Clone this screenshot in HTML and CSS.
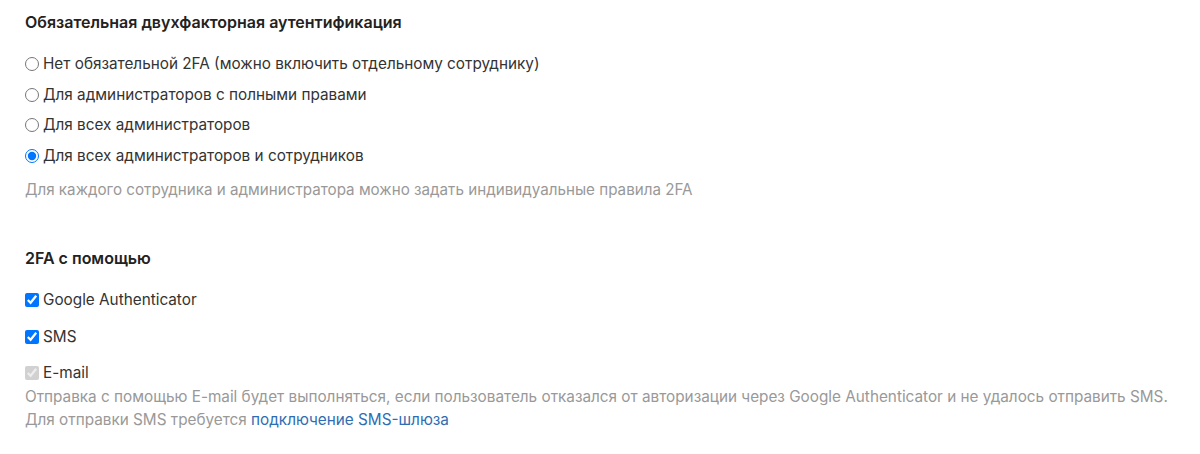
FILE: index.html
```html
<!DOCTYPE html>
<html lang="ru">
<head>
    <meta charset="UTF-8">
    <title>Двухфакторная аутентификация</title>
    <link rel="stylesheet" href="styles.css">
</head>
<body>
    <section class="block">
        <h3>Обязательная двухфакторная аутентификация</h3>
        <div class="options">
            <label class="option"><input type="radio" name="force2fa" value="none">Нет обязательной 2FA (можно включить отдельному сотруднику)</label>
            <label class="option"><input type="radio" name="force2fa" value="full">Для администраторов с полными правами</label>
            <label class="option"><input type="radio" name="force2fa" value="admins">Для всех администраторов</label>
            <label class="option"><input type="radio" name="force2fa" value="all" checked>Для всех администраторов и сотрудников</label>
        </div>
        <p class="hint">Для каждого сотрудника и администратора можно задать индивидуальные правила 2FA</p>
    </section>

    <section class="block methods">
        <h3>2FA с помощью</h3>
        <div class="checks">
            <label class="option"><input type="checkbox" checked>Google Authenticator</label>
            <label class="option"><input type="checkbox" checked>SMS</label>
            <label class="option"><input type="checkbox" checked disabled>E-mail</label>
        </div>
        <p class="hint tight">Отправка с помощью E-mail будет выполняться, если пользователь отказался от авторизации через Google Authenticator и не удалось отправить SMS.<br>
        Для отправки SMS требуется <a href="#">подключение SMS-шлюза</a></p>
    </section>
</body>
</html>
```

FILE: styles.css
```css
body {
    margin: 0;
    padding: 12px 25px 0;
    font-family: Inter, "Noto Sans", sans-serif;
    font-size: 15.3px;
    color: #333;
    background: #fff;
}
h3 {
    margin: 0;
    font-size: 16px;
    font-weight: 600;
    line-height: 20px;
    color: #222;
}
.options {
    display: flex;
    flex-direction: column;
    gap: 10.7px;
    margin-top: 22px;
}
.option {
    display: flex;
    align-items: center;
    line-height: 20px;
    cursor: pointer;
}
.option input {
    margin: 0 4px 0 0;
    width: 14px;
    height: 14px;
}
.hint {
    margin: 12px 0 0;
    color: #999;
    font-size: 15.2px;
    line-height: 23px;
}
.hint.tight {
    margin-top: 2px;
    font-size: 15.3px;
}
.hint a {
    color: #2f6db3;
    text-decoration: none;
}
.methods {
    margin-top: 47px;
}
.checks {
    display: flex;
    flex-direction: column;
    gap: 17px;
    margin-top: 22px;
}
.checks .option:last-child {
    margin-top: -1px;
}
```
